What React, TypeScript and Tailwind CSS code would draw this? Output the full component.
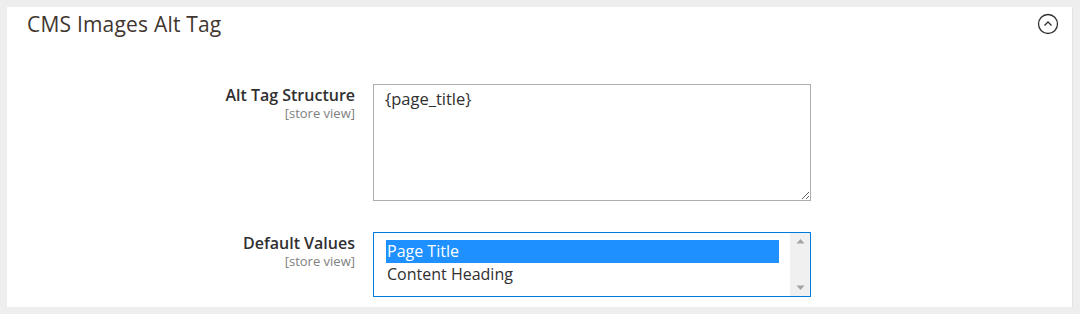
import React from "react";

const font = "font-['Open_Sans',_'Noto_Sans',sans-serif]";

const CollapseIcon: React.FC = () => (
	<svg width="22" height="22" viewBox="0 0 22 22" fill="none">
		<circle cx="11" cy="11" r="9.5" stroke="#303030" strokeWidth="1.3" />
		<path d="M7.5 12.5 L11 9 L14.5 12.5" stroke="#303030" strokeWidth="1.3" />
	</svg>
);

const FieldLabel: React.FC<{label: string}> = ({label}) => (
	<div className="flex flex-col items-end">
		<span className="text-[16px] leading-[18px] font-semibold text-[#303030]">
			{label}
		</span>
		<span className="mt-[2px] text-[13px] leading-[14px] text-[#808080]">
			[store view]
		</span>
	</div>
);

const App: React.FC = () => {
	return (
		<div className={`w-[1080px] h-[314px] bg-[#eeeeee] p-[7px] ${font}`}>
			<div className="bg-white h-[300px] border-r border-[#e3e3e3]">
				<div className="flex items-center justify-between pl-[20px] pr-[13px] h-[33px]">
					<h2 className="text-[21px] leading-[28px] font-medium text-[#41362f] tracking-[0.2px]">
						CMS Images Alt Tag
					</h2>
					<CollapseIcon />
				</div>

				<div className="grid grid-cols-[348px_438px] gap-x-[18px] mt-[44px]">
					<div className="pt-[2px]">
						<FieldLabel label="Alt Tag Structure" />
					</div>
					<textarea
						defaultValue="{page_title}"
						className="h-[117px] border border-[#adadad] px-[11px] py-[3px] text-[16.5px] leading-[22px] text-[#303030] resize outline-none"
					/>

					<div className="pt-[2px] mt-[31px]">
						<FieldLabel label="Default Values" />
					</div>
					<div className="mt-[31px] h-[65px] border border-[#007bdb] flex">
						<div className="flex-1 pl-[12px] pr-[11px] pt-[7px] text-[16px] leading-[23px] text-[#303030]">
							<div className="bg-[#1e90ff] text-white pl-[1px]">Page Title</div>
							<div className="pl-[1px]">Content Heading</div>
						</div>
						<div className="w-[20px] bg-[#f0f0f0] flex flex-col items-center justify-between py-[5px]">
							<svg width="9" height="6" viewBox="0 0 9 6">
								<path d="M0.5 5.5 L4.5 1 L8.5 5.5 Z" fill="#a3a3a3" />
							</svg>
							<svg width="9" height="6" viewBox="0 0 9 6">
								<path d="M0.5 0.5 L4.5 5 L8.5 0.5 Z" fill="#a3a3a3" />
							</svg>
						</div>
					</div>
				</div>
			</div>
		</div>
	);
};

export default App;
